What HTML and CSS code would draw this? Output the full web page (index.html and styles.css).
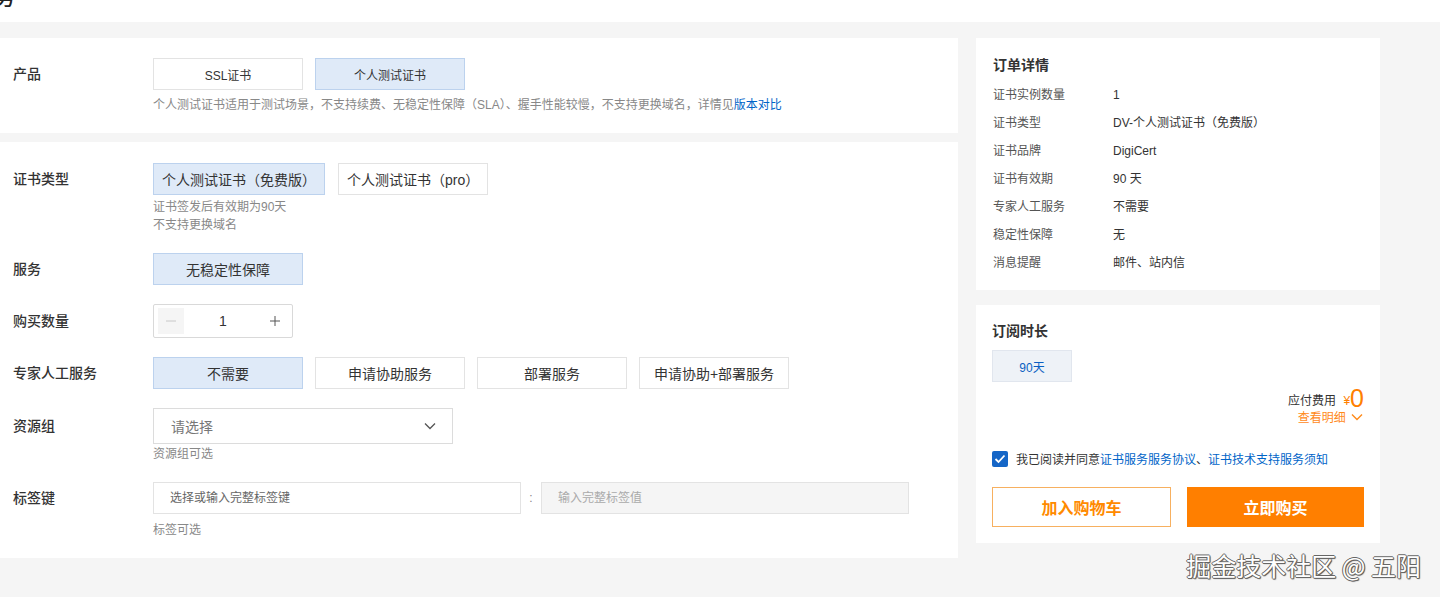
FILE: index.html
```html
<!DOCTYPE html>
<html lang="zh-CN">
  <head>
    <meta charset="UTF-8" />
    <meta name="viewport" content="width=device-width, initial-scale=1.0" />
    <title>个人测试证书购买</title>
    <link rel="stylesheet" href="styles.css">
  </head>
  <body>
    <div class="page-head">
      <h1>服务</h1>
    </div>

    <div class="buy-layout">
      <div class="config-col">
        <!-- 产品选择 -->
        <div class="panel panel-product">
          <div class="form-row">
            <div class="form-label">产品</div>
            <div class="form-field">
              <div class="option-group small">
                <button class="option">SSL证书</button>
                <button class="option active">个人测试证书</button>
              </div>
              <p class="hint hint-product">
                个人测试证书适用于测试场景，不支持续费、无稳定性保障（SLA）、握手性能较慢，不支持更换域名，详情见<a href="#" class="link">版本对比</a>
              </p>
            </div>
          </div>
        </div>

        <!-- 规格配置 -->
        <div class="panel panel-spec">
          <div class="form-row">
            <div class="form-label">证书类型</div>
            <div class="form-field">
              <div class="option-group">
                <button class="option auto active">个人测试证书（免费版）</button>
                <button class="option auto">个人测试证书（pro）</button>
              </div>
              <p class="hint hint-type">证书签发后有效期为90天<br />不支持更换域名</p>
            </div>
          </div>

          <div class="form-row">
            <div class="form-label">服务</div>
            <div class="form-field">
              <div class="option-group">
                <button class="option active">无稳定性保障</button>
              </div>
            </div>
          </div>

          <div class="form-row">
            <div class="form-label label-tall">购买数量</div>
            <div class="form-field">
              <div class="stepper">
                <span class="step-btn disabled">
                  <svg width="12" height="12" viewBox="0 0 12 12"><path d="M1 6h10" stroke="currentColor" stroke-width="1" /></svg>
                </span>
                <span class="step-value">1</span>
                <span class="step-btn">
                  <svg width="12" height="12" viewBox="0 0 12 12"><path d="M1 6h10M6 1v10" stroke="currentColor" stroke-width="1" /></svg>
                </span>
              </div>
            </div>
          </div>

          <div class="form-row">
            <div class="form-label">专家人工服务</div>
            <div class="form-field">
              <div class="option-group">
                <button class="option active">不需要</button>
                <button class="option">申请协助服务</button>
                <button class="option">部署服务</button>
                <button class="option">申请协助+部署服务</button>
              </div>
            </div>
          </div>

          <div class="form-row">
            <div class="form-label label-select">资源组</div>
            <div class="form-field">
              <div class="select">
                <span>请选择</span>
                <svg width="12" height="8" viewBox="0 0 12 8"><path d="M1 1.5l5 5 5-5" fill="none" stroke="#555" stroke-width="1.3" /></svg>
              </div>
              <p class="hint hint-group">资源组可选</p>
            </div>
          </div>

          <div class="form-row">
            <div class="form-label">标签键</div>
            <div class="form-field">
              <div class="tag-inputs">
                <input class="input tag-key" type="text" placeholder="选择或输入完整标签键" />
                <span class="tag-sep">:</span>
                <input class="input tag-value" type="text" placeholder="输入完整标签值" disabled />
              </div>
              <p class="hint hint-tag">标签可选</p>
            </div>
          </div>
        </div>
      </div>

      <div class="summary-col">
        <!-- 订单详情 -->
        <div class="panel order-detail">
          <h3 class="card-title">订单详情</h3>
          <dl class="detail-list">
            <div class="detail-item"><dt>证书实例数量</dt><dd>1</dd></div>
            <div class="detail-item"><dt>证书类型</dt><dd>DV-个人测试证书（免费版）</dd></div>
            <div class="detail-item"><dt>证书品牌</dt><dd>DigiCert</dd></div>
            <div class="detail-item"><dt>证书有效期</dt><dd>90 天</dd></div>
            <div class="detail-item"><dt>专家人工服务</dt><dd>不需要</dd></div>
            <div class="detail-item"><dt>稳定性保障</dt><dd>无</dd></div>
            <div class="detail-item"><dt>消息提醒</dt><dd>邮件、站内信</dd></div>
          </dl>
        </div>

        <!-- 订阅与支付 -->
        <div class="panel order-pay">
          <h3 class="card-title">订阅时长</h3>
          <button class="duration">90天</button>

          <div class="price">
            <span class="price-label">应付费用</span>
            <span class="price-currency">¥</span><span class="price-value">0</span>
          </div>
          <div class="price-detail">
            查看明细
            <svg width="12" height="8" viewBox="0 0 12 8"><path d="M1 1.5l5 5 5-5" fill="none" stroke="currentColor" stroke-width="1.4" /></svg>
          </div>

          <label class="agree">
            <span class="checkbox">
              <svg width="12" height="10" viewBox="0 0 12 10"><path d="M1.5 5l3 3 6-6.5" fill="none" stroke="#fff" stroke-width="1.8" /></svg>
            </span>
            <span>我已阅读并同意<a href="#" class="link">证书服务服务协议</a>、<a href="#" class="link">证书技术支持服务须知</a></span>
          </label>

          <div class="pay-actions">
            <button class="btn-cart">加入购物车</button>
            <button class="btn-buy">立即购买</button>
          </div>
        </div>
      </div>
    </div>

    <div class="watermark">掘金技术社区 @ 五阳</div>
  </body>
</html>
```

FILE: styles.css
```css
/* Basic reset */
* {
  margin: 0;
  padding: 0;
  box-sizing: border-box;
}

body {
  font-family: "Liberation Sans", "Noto Sans CJK SC", sans-serif;
  background-color: #f5f5f5;
  color: #333;
  font-size: 12px;
  height: 597px;
  overflow: hidden;
  position: relative;
}

button,
input {
  font-family: inherit;
  color: inherit;
}

.link {
  color: #0064c8;
  text-decoration: none;
}

/* Top heading strip (page title scrolled mostly out of view) */
.page-head {
  height: 22px;
  background-color: #fff;
  overflow: hidden;
}

.page-head h1 {
  font-size: 22px;
  font-weight: 500;
  line-height: 22px;
  margin-top: -13px;
  margin-left: -9px;
  width: 24px;
  overflow: hidden;
  direction: rtl;
  white-space: nowrap;
  color: #222;
}

/* Layout */
.buy-layout {
  display: flex;
  gap: 18px;
  padding-top: 16px;
}

.config-col {
  width: 958px;
  display: flex;
  flex-direction: column;
  gap: 9px;
}

.summary-col {
  width: 404px;
  display: flex;
  flex-direction: column;
  gap: 15px;
}

.panel {
  background-color: #fff;
}

/* Form rows */
.panel-product {
  padding: 20px 0 19px;
}

.panel-spec {
  padding: 21px 0 19px;
}

.form-row {
  display: flex;
}

.form-row + .form-row {
  margin-top: 19px;
}

.form-label {
  width: 153px;
  padding-left: 13px;
  font-size: 14px;
  font-weight: 500;
  line-height: 32px;
  color: #333;
  flex-shrink: 0;
}

.label-tall {
  line-height: 34px;
}

.label-select {
  line-height: 36px;
}

.form-field {
  flex-grow: 1;
}

.option-group {
  display: flex;
  gap: 12px;
}

.option {
  width: 150px;
  height: 32px;
  background-color: #fff;
  border: 1px solid #e3e3e3;
  font-size: 14px;
  color: #333;
  cursor: pointer;
}

.option.auto {
  width: auto;
  min-width: 150px;
  padding: 0 8px;
}

.option-group .option.auto + .option.auto {
  margin-left: 1px;
}

.option.active {
  background-color: #dfeaf8;
  border-color: #bcd2ee;
}

.option-group.small .option {
  font-size: 12px;
}

.hint {
  font-size: 12px;
  line-height: 18px;
  color: #888;
}

.hint-product {
  margin-top: 6px;
}

.hint-type {
  margin-top: 3px;
}

.hint-group {
  margin-top: 1px;
}

.hint-tag {
  margin-top: 7px;
}

/* Stepper */
.stepper {
  width: 140px;
  height: 34px;
  border: 1px solid #d9d9d9;
  border-radius: 2px;
  display: flex;
  align-items: center;
  justify-content: space-between;
  padding: 0 4px;
}

.step-btn {
  width: 26px;
  height: 26px;
  display: flex;
  align-items: center;
  justify-content: center;
  color: #555;
}

.step-btn.disabled {
  background-color: #f5f5f5;
  color: #c8c8c8;
}

.step-value {
  font-size: 14px;
  color: #333;
}

/* Select */
.select {
  width: 300px;
  height: 36px;
  border: 1px solid #dcdcdc;
  display: flex;
  align-items: center;
  justify-content: space-between;
  padding: 0 16px 0 17px;
  font-size: 14px;
  color: #777;
}

/* Tag inputs */
.tag-inputs {
  display: flex;
  align-items: center;
}

.input {
  height: 32px;
  border: 1px solid #e3e3e3;
  padding: 0 16px;
  font-size: 12px;
  outline: none;
}

.input::placeholder {
  color: #666;
}

.tag-key {
  width: 368px;
}

.tag-sep {
  width: 20px;
  text-align: center;
  color: #888;
}

.tag-value {
  width: 368px;
  background-color: #f5f5f5;
}

.tag-value::placeholder {
  color: #aaa;
}

/* Order detail */
.order-detail {
  padding: 17px 17px 13px;
}

.card-title {
  font-size: 14px;
  line-height: 20px;
  font-weight: 700;
  color: #333;
}

.detail-list {
  margin-top: 6px;
}

.detail-item {
  display: flex;
  line-height: 28px;
  font-size: 12px;
}

.detail-item dt {
  width: 120px;
  color: #555;
}

.detail-item dd {
  color: #333;
}

/* Subscription & pay */
.order-pay {
  padding: 16px 16px 16px;
}

.duration {
  margin-top: 9px;
  width: 80px;
  height: 32px;
  background-color: #eef2f7;
  border: 1px solid #e1e6ee;
  color: #0a5fc2;
  font-size: 12px;
}

.price {
  margin-top: 4px;
  text-align: right;
  line-height: 24px;
  height: 24px;
}

.price-label {
  font-size: 12px;
  color: #333;
}

.price-currency {
  margin-left: 4px;
  font-size: 12px;
  color: #ff8000;
}

.price-value {
  font-size: 25px;
  font-weight: 300;
  color: #ff8000;
  vertical-align: -2px;
}

.price-detail {
  line-height: 16px;
  text-align: right;
  color: #ff8a1a;
  font-size: 12px;
  padding-right: 1px;
}

.price-detail svg {
  margin-left: 2px;
  vertical-align: 1px;
}

.agree {
  margin-top: 24px;
  display: flex;
  align-items: center;
  gap: 8px;
  font-size: 12px;
  color: #333;
}

.checkbox {
  width: 16px;
  height: 16px;
  border-radius: 2px;
  background-color: #1566c7;
  display: flex;
  align-items: center;
  justify-content: center;
}

.pay-actions {
  margin-top: 20px;
  display: flex;
  gap: 16px;
}

.pay-actions button {
  flex: 1;
  height: 40px;
  font-size: 16px;
  font-weight: 700;
  cursor: pointer;
}

.btn-cart {
  background-color: #fff;
  border: 1px solid #f7b060;
  color: #ff8a00 !important;
}

.btn-buy {
  background-color: #ff7f00;
  border: none;
  color: #fff !important;
}

/* Watermark overlay */
.watermark {
  position: absolute;
  right: 19px;
  bottom: 17px;
  font-size: 25px;
  line-height: 30px;
  color: #fff;
  text-shadow: -1px 0 #666, 1px 0 #666, 0 -1px #666, 0 1px #666, 1px 1px 1px #444;
  font-family: "Noto Sans CJK SC", sans-serif;
}
```
